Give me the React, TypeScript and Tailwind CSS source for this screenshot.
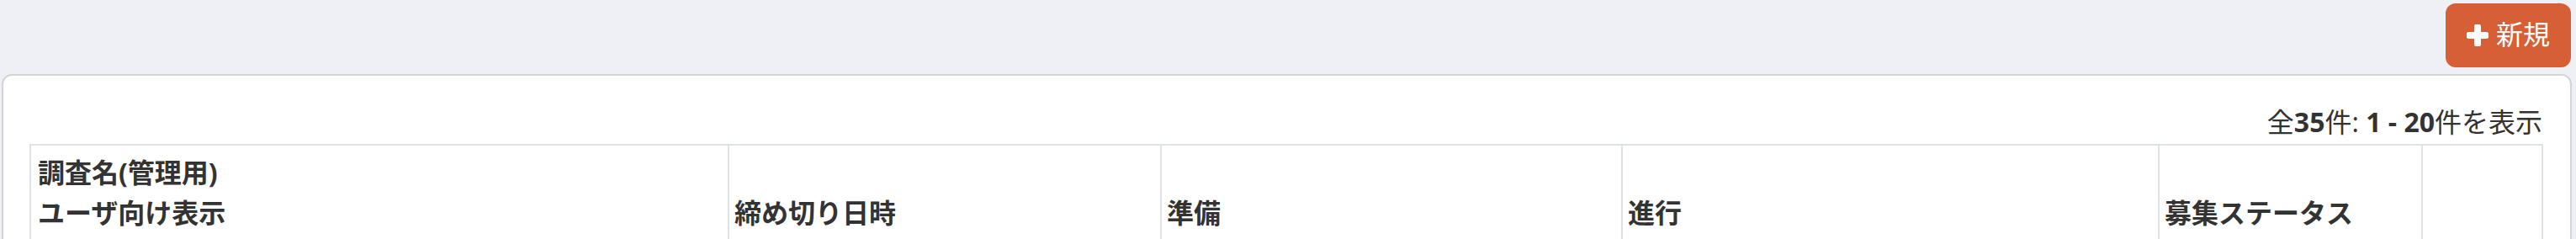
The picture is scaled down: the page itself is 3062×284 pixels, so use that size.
import React from "react";

const FONT = { fontFamily: '"Open Sans", "Noto Sans CJK JP", sans-serif' };

function PlusIcon() {
  return (
    <svg width="26" height="26" viewBox="0 0 26 26" aria-hidden="true">
      <path d="M13 3 V23 M3 13 H23" stroke="#ffffff" strokeWidth="8" strokeLinecap="round" fill="none" />
    </svg>
  );
}

export default function App() {
  const cols = [
    { w: 830, label: ["調査名(管理用)", "ユーザ向け表示"], pl: "pl-[8px]" },
    { w: 514, label: ["締め切り日時"], pl: "pl-[6px]" },
    { w: 548, label: ["準備"], pl: "pl-[6px]" },
    { w: 638, label: ["進行"], pl: "pl-[6px]" },
    { w: 313, label: ["募集ステータス"], pl: "pl-[6px]" },
    { w: 143, label: [], pl: "pl-[6px]" },
  ];
  return (
    <div className="min-h-screen bg-[#eff0f5]" style={FONT}>
      <div className="flex justify-end pt-[4px] pr-[6px]">
        <button className="flex h-[76px] w-[149px] items-center justify-center gap-[9px] rounded-[12px] bg-[#d75f36] text-[32px] leading-none text-white">
          <PlusIcon />
          <span className="pb-[2px]">新規</span>
        </button>
      </div>
      <div className="mt-[8px] ml-[2px] mr-[5px] rounded-t-[12px] border-2 border-[#d3d3d8] bg-white pl-[31px] pr-[33px] pt-[33px]">
        <div className="text-right text-[32px] leading-[44px] text-[#333333]">
          全<b>35</b>件: <b>1 - 20</b>件を表示
        </div>
        <table className="mt-[4px] w-[2986px] table-fixed border-collapse text-[32px] leading-[48px] text-[#333333]">
          <colgroup>
            {cols.map((c, i) => (
              <col key={i} style={{ width: c.w }} />
            ))}
          </colgroup>
          <thead>
            <tr>
              {cols.map((c, i) => (
                <th
                  key={i}
                  className={`border-2 border-[#dee2e6] ${c.pl} pr-[9px] pt-[8px] pb-[12px] text-left align-bottom font-bold`}
                >
                  {c.label.map((l, j) => (
                    <div key={j}>{l}</div>
                  ))}
                </th>
              ))}
            </tr>
          </thead>
        </table>
      </div>
    </div>
  );
}
